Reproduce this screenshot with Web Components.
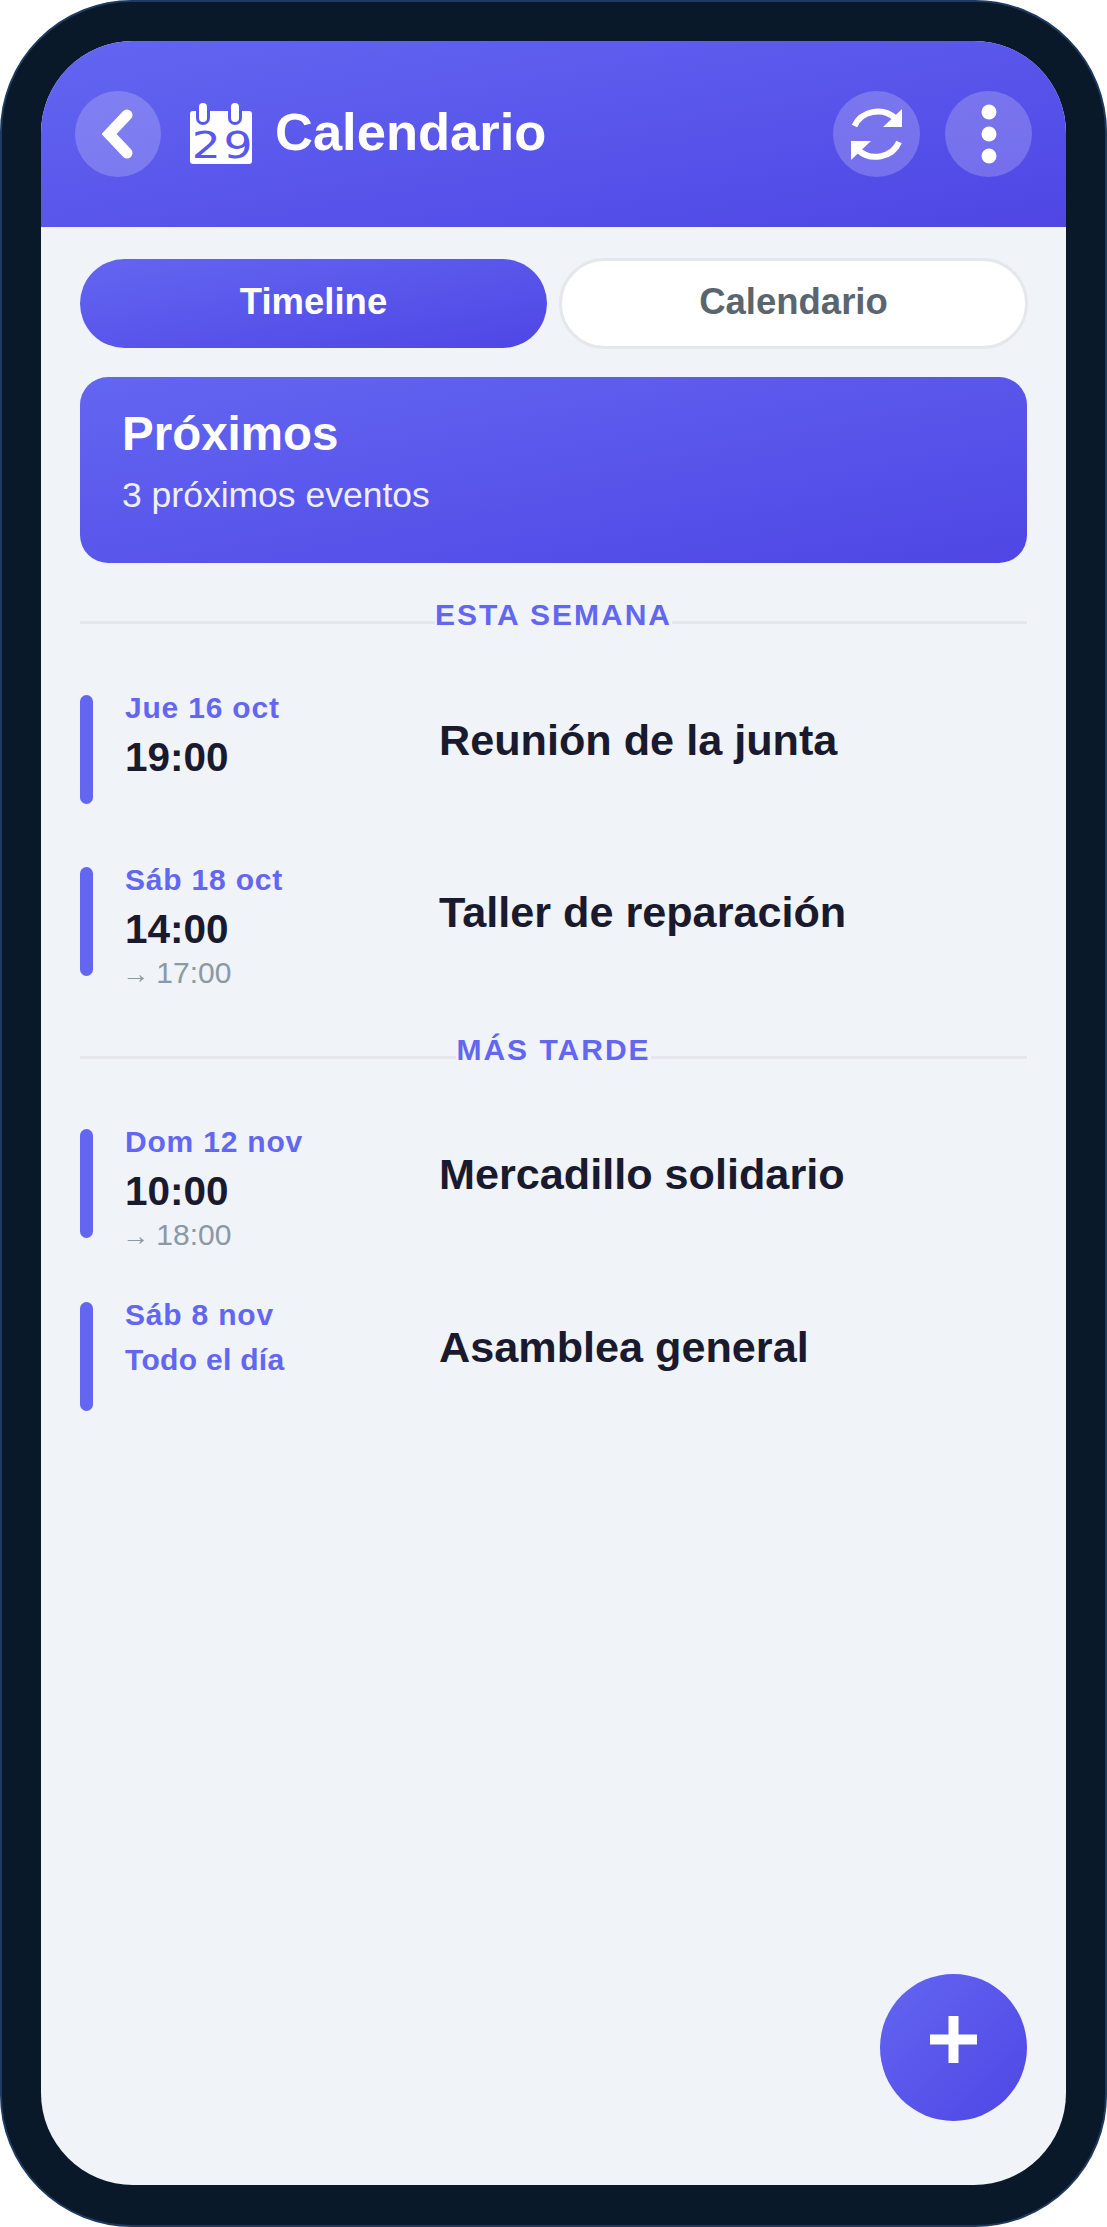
<!DOCTYPE html>
<html>
<head>
<meta charset="utf-8">
<style>
  html, body { margin: 0; padding: 0; background: #fff; }
  body { font-family: "Liberation Sans", Arial, sans-serif; }
</style>
</head>
<body>
<phone-frame>
  <app-header title-text="Calendario"></app-header>
  <view-tabs></view-tabs>
  <summary-card heading="Próximos" sub="3 próximos eventos"></summary-card>
  <section-label style="--top:18px">ESTA SEMANA</section-label>
  <event-row date="Jue 16 oct" time="19:00" title-text="Reunión de la junta" style="--top:71px"></event-row>
  <event-row date="Sáb 18 oct" time="14:00" end="17:00" title-text="Taller de reparación" style="--top:63px"></event-row>
  <section-label style="--top:40px">MÁS TARDE</section-label>
  <event-row date="Dom 12 nov" time="10:00" end="18:00" title-text="Mercadillo solidario" style="--top:70px"></event-row>
  <event-row date="Sáb 8 nov" all-day title-text="Asamblea general" style="--top:64px"></event-row>
  <add-button></add-button>
</phone-frame>

<script>
const GRADIENT = 'linear-gradient(to bottom right, #6366f1 0%, #4f46e5 100%)';

class PhoneFrame extends HTMLElement {
  constructor() {
    super();
    this.attachShadow({ mode: 'open' }).innerHTML = `
      <style>
        :host { display: block; width: 1107px; height: 2227px; box-sizing: border-box;
          background: #0a1929; border: 2px solid #1e3a5f; border-radius: 132px; padding: 39px 39px 40px; }
        .screen { position: relative; height: 100%; background: #f0f3f8; border-radius: 92px; overflow: hidden; }
      </style>
      <div class="screen"><slot></slot></div>`;
  }
}

class AppHeader extends HTMLElement {
  constructor() {
    super();
    const title = this.getAttribute('title-text');
    this.attachShadow({ mode: 'open' }).innerHTML = `
      <style>
        :host { display: flex; align-items: center; height: 186px; box-sizing: border-box; padding: 0 34px;
          background: ${GRADIENT}; color: #fff; }
        .btn { width: 87px; height: 86px; border-radius: 50%; background: rgba(255,255,255,.2);
          display: flex; align-items: center; justify-content: center; flex: none; }
        .back { width: 86px; }
        .cal { margin-left: 29px; flex: none; display: block; overflow: visible; }
        h1 { margin: 0 0 0 23px; font-size: 52.5px; font-weight: 700; line-height: 60px; flex: 1; position: relative; top: -2px; }
        .more { margin-left: 25px; }
      </style>
      <div class="btn back">
        <svg width="32" height="50" viewBox="0 0 32 50"><path d="M25 6 L7 25 L25 44" fill="none" stroke="#fff" stroke-width="11" stroke-linecap="round"/></svg>
      </div>
      <svg class="cal" width="62" height="62" viewBox="0 0 62 62">
        <rect x="0" y="8" width="62" height="53" rx="3" fill="#fff"/>
        <path d="M6 8 V15 A7 7 0 0 0 20 15 V8 M38 8 V15 A7 7 0 0 0 52 15 V8" fill="#5a58ec"/>
        <rect x="9" y="0" width="8" height="19" rx="4" fill="#fff"/>
        <rect x="41" y="0" width="8" height="19" rx="4" fill="#fff"/>
        <text transform="scale(1.2 1)" x="1.500 28" y="55" font-family="DejaVu Sans, sans-serif" font-size="38" fill="#5a58ec">29</text>
      </svg>
      <h1>${title}</h1>
      <div class="btn">
        <svg width="52" height="52" viewBox="0 0 52 52">
          <path d="M3.500 18 A25 23 0 0 1 44 10 M48 34 A25 23 0 0 1 7 42" fill="none" stroke="#fff" stroke-width="6"/>
          <path d="M51 1 V19 H32 Z M0 33 H20 L0 52 Z" fill="#fff"/>
        </svg>
      </div>
      <div class="btn more">
        <svg width="16" height="60" viewBox="0 0 16 60"><circle cx="8" cy="8" r="7.500" fill="#fff"/><circle cx="8" cy="30" r="7.500" fill="#fff"/><circle cx="8" cy="52" r="7.500" fill="#fff"/></svg>
      </div>`;
  }
}

class ViewTabs extends HTMLElement {
  constructor() {
    super();
    this.attachShadow({ mode: 'open' }).innerHTML = `
      <style>
        :host { display: flex; gap: 12px; padding: 32px 38px 0 39px; }
        div { box-sizing: border-box; display: flex; align-items: center;
          justify-content: center; font-size: 36.5px; font-weight: 700; padding-bottom: 4px; }
        .on { width: 467px; height: 89px; border-radius: 45px; background: ${GRADIENT}; color: #fff; }
        .off { width: 469px; height: 91px; margin: -1px 0; border-radius: 46px; background: #fff; color: #5b6570; border: 3px solid #e5e7eb; }
      </style>
      <div class="on">Timeline</div>
      <div class="off">Calendario</div>`;
  }
}

class SummaryCard extends HTMLElement {
  constructor() {
    super();
    this.attachShadow({ mode: 'open' }).innerHTML = `
      <style>
        :host { display: block; margin: 29px 39px 0; height: 186px; box-sizing: border-box; padding: 30px 42px 0;
          background: ${GRADIENT}; border-radius: 28px; color: #fff; }
        .h { font-size: 47.5px; font-weight: 700; line-height: 54px; }
        .s { font-size: 35.5px; line-height: 40px; margin-top: 14px; opacity: .9; }
      </style>
      <div class="h">${this.getAttribute('heading')}</div>
      <div class="s">${this.getAttribute('sub')}</div>`;
  }
}

class SectionLabel extends HTMLElement {
  constructor() {
    super();
    this.attachShadow({ mode: 'open' }).innerHTML = `
      <style>
        :host { display: flex; margin: var(--top) 39px 0; height: 43px; }
        i { flex: 1; height: 3px; background: #e5e7eb; align-self: flex-end; }
        span { font-size: 30px; font-weight: 700; letter-spacing: 2px; line-height: 43px; color: #6366f1; padding-top: 12px; }
      </style>
      <i></i><span><slot></slot></span><i></i>`;
  }
}

class EventRow extends HTMLElement {
  constructor() {
    super();
    const end = this.getAttribute('end');
    const allDay = this.hasAttribute('all-day');
    this.attachShadow({ mode: 'open' }).innerHTML = `
      <style>
        :host { display: flex; margin: var(--top) 39px 0; height: 109px; }
        .bar { width: 13px; height: 109px; border-radius: 7px; background: #6366f1; flex: none; }
        .when { width: 314px; margin-left: 32px; flex: none; margin-top: -5px; }
        .date { font-size: 30px; font-weight: 700; letter-spacing: .8px; line-height: 36px; color: #6366f1; }
        .allday { margin-top: 9px; letter-spacing: .3px; }
        .time { font-size: 40.5px; font-weight: 700; line-height: 48px; color: #1a1a2e; margin-top: 7px; }
        .end { font-size: 30px; line-height: 36px; color: #8b98a5; margin-top: 2px; white-space: nowrap; }
        .end b { font-weight: 400; font-size: 27px; margin: 0 -1px 0 -3px; }
        .title { font-size: 43.2px; font-weight: 700; line-height: 50px; color: #1a1a2e; padding-top: 20px; }
      </style>
      <div class="bar"></div>
      <div class="when">
        <div class="date">${this.getAttribute('date')}</div>
        ${allDay ? '<div class="date allday">Todo el día</div>' : `<div class="time">${this.getAttribute('time')}</div>`}
        ${end ? `<div class="end"><b>→</b> ${end}</div>` : ''}
      </div>
      <div class="title">${this.getAttribute('title-text')}</div>`;
  }
}

class AddButton extends HTMLElement {
  constructor() {
    super();
    this.attachShadow({ mode: 'open' }).innerHTML = `
      <style>
        :host { position: absolute; right: 39px; bottom: 64px; width: 147px; height: 147px; border-radius: 50%;
          background: ${GRADIENT}; display: flex; align-items: center; justify-content: center; }
        svg { margin-bottom: 16px; }
      </style>
      <svg width="47" height="47" viewBox="0 0 47 47"><path d="M18.500 0 H28.500 V18.500 H47 V28.500 H28.500 V47 H18.500 V28.500 H0 V18.500 H18.500 Z" fill="#fff"/></svg>`;
  }
}

customElements.define('phone-frame', PhoneFrame);
customElements.define('app-header', AppHeader);
customElements.define('view-tabs', ViewTabs);
customElements.define('summary-card', SummaryCard);
customElements.define('section-label', SectionLabel);
customElements.define('event-row', EventRow);
customElements.define('add-button', AddButton);
</script>
</body>
</html>
